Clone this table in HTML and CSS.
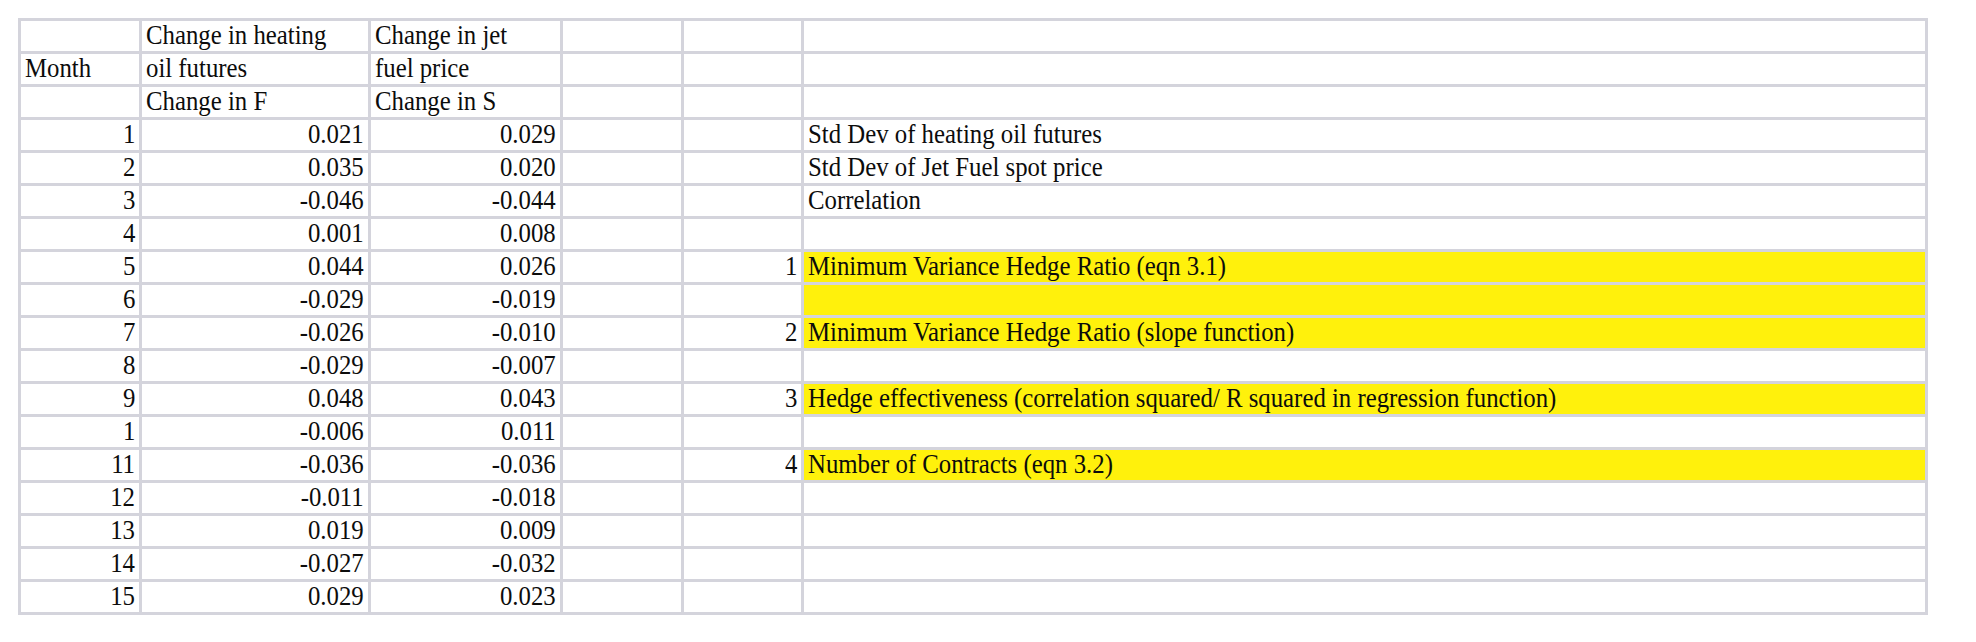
FILE: index.html
```html
<!DOCTYPE html>
<html>
<head>
<meta charset="utf-8">
<link rel="stylesheet" href="styles.css">
</head>
<body>
<table class="sheet">
  <colgroup>
    <col class="c-a"><col class="c-b"><col class="c-c"><col class="c-d"><col class="c-e"><col class="c-f">
  </colgroup>
  <tr><td></td><td><span class="t">Change in heating</span></td><td><span class="t">Change in jet</span></td><td></td><td></td><td></td></tr>
  <tr><td><span class="t">Month</span></td><td><span class="t">oil futures</span></td><td><span class="t">fuel price</span></td><td></td><td></td><td></td></tr>
  <tr><td></td><td><span class="t">Change in F</span></td><td><span class="t">Change in S</span></td><td></td><td></td><td></td></tr>
  <tr><td class="num"><span class="t">1</span></td><td class="num"><span class="t">0.021</span></td><td class="num"><span class="t">0.029</span></td><td></td><td></td><td><span class="t">Std Dev of heating oil futures</span></td></tr>
  <tr><td class="num"><span class="t">2</span></td><td class="num"><span class="t">0.035</span></td><td class="num"><span class="t">0.020</span></td><td></td><td></td><td><span class="t">Std Dev of Jet Fuel spot price</span></td></tr>
  <tr><td class="num"><span class="t">3</span></td><td class="num"><span class="t">-0.046</span></td><td class="num"><span class="t">-0.044</span></td><td></td><td></td><td><span class="t">Correlation</span></td></tr>
  <tr><td class="num"><span class="t">4</span></td><td class="num"><span class="t">0.001</span></td><td class="num"><span class="t">0.008</span></td><td></td><td></td><td></td></tr>
  <tr><td class="num"><span class="t">5</span></td><td class="num"><span class="t">0.044</span></td><td class="num"><span class="t">0.026</span></td><td></td><td class="num"><span class="t">1</span></td><td class="hl"><span class="t">Minimum Variance Hedge Ratio (eqn 3.1)</span></td></tr>
  <tr><td class="num"><span class="t">6</span></td><td class="num"><span class="t">-0.029</span></td><td class="num"><span class="t">-0.019</span></td><td></td><td></td><td class="hl"></td></tr>
  <tr><td class="num"><span class="t">7</span></td><td class="num"><span class="t">-0.026</span></td><td class="num"><span class="t">-0.010</span></td><td></td><td class="num"><span class="t">2</span></td><td class="hl"><span class="t">Minimum Variance Hedge Ratio (slope function)</span></td></tr>
  <tr><td class="num"><span class="t">8</span></td><td class="num"><span class="t">-0.029</span></td><td class="num"><span class="t">-0.007</span></td><td></td><td></td><td></td></tr>
  <tr><td class="num"><span class="t">9</span></td><td class="num"><span class="t">0.048</span></td><td class="num"><span class="t">0.043</span></td><td></td><td class="num"><span class="t">3</span></td><td class="hl"><span class="t">Hedge effectiveness (correlation squared/ R squared in regression function)</span></td></tr>
  <tr><td class="num"><span class="t">1</span></td><td class="num"><span class="t">-0.006</span></td><td class="num"><span class="t">0.011</span></td><td></td><td></td><td></td></tr>
  <tr><td class="num"><span class="t">11</span></td><td class="num"><span class="t">-0.036</span></td><td class="num"><span class="t">-0.036</span></td><td></td><td class="num"><span class="t">4</span></td><td class="hl"><span class="t">Number of Contracts (eqn 3.2)</span></td></tr>
  <tr><td class="num"><span class="t">12</span></td><td class="num"><span class="t">-0.011</span></td><td class="num"><span class="t">-0.018</span></td><td></td><td></td><td></td></tr>
  <tr><td class="num"><span class="t">13</span></td><td class="num"><span class="t">0.019</span></td><td class="num"><span class="t">0.009</span></td><td></td><td></td><td></td></tr>
  <tr><td class="num"><span class="t">14</span></td><td class="num"><span class="t">-0.027</span></td><td class="num"><span class="t">-0.032</span></td><td></td><td></td><td></td></tr>
  <tr><td class="num"><span class="t">15</span></td><td class="num"><span class="t">0.029</span></td><td class="num"><span class="t">0.023</span></td><td></td><td></td><td></td></tr>
</table>
</body>
</html>
```
FILE: styles.css
```css
html, body {
  margin: 0;
  padding: 0;
  background: #ffffff;
}

body {
  padding: 18px 0 0 18px;
  font-family: "Liberation Serif", "Times New Roman", serif;
  font-size: 27px;
  color: #0c0c0c;
}

.sheet {
  border-collapse: collapse;
  table-layout: fixed;
  width: 1907px;
}

.c-a { width: 121px; }
.c-b { width: 229px; }
.c-c { width: 192px; }
.c-d { width: 121px; }
.c-e { width: 120px; }
.c-f { width: 1124px; }

.sheet td {
  border: 3px solid #d4d4dc;
  height: 27px;
  padding: 1px 4px 2px 4px;
  line-height: 27px;
  white-space: nowrap;
  overflow: hidden;
  vertical-align: middle;
}

/* The sheet's type is a Times face squeezed horizontally. */
.t {
  display: inline-block;
  transform: scaleX(0.918);
  transform-origin: 0 50%;
}

.sheet td.num {
  text-align: right;
}

.sheet td.num .t {
  transform-origin: 100% 50%;
}

.sheet td.hl {
  background: #fff10c;
}
```
